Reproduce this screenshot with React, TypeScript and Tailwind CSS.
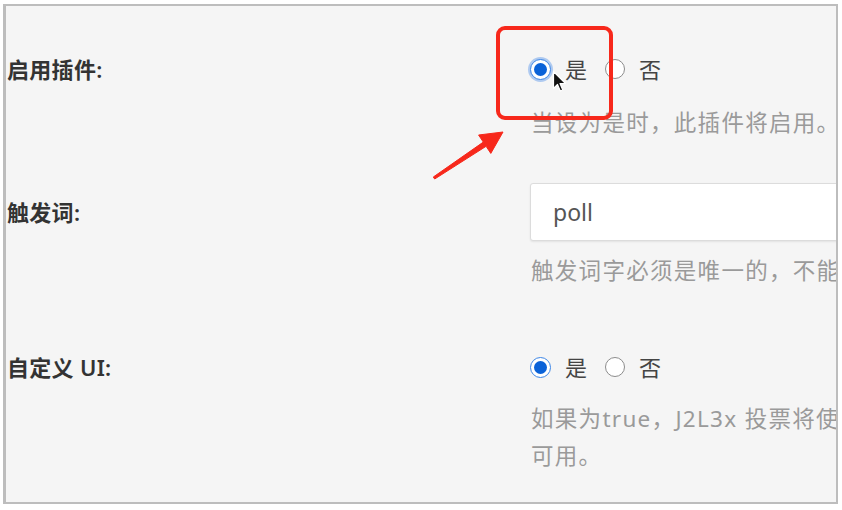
const font = "font-['Noto_Sans','Noto_Sans_CJK_SC',sans-serif]";

function Radio({ checked, focus }: { checked?: boolean; focus?: boolean }) {
  if (!checked) {
    return <span className="w-[20px] h-[20px] rounded-full border border-[#8c8c8c] bg-white shrink-0" />;
  }
  return (
    <span
      className={
        'w-[21px] h-[21px] rounded-full border-[1.5px] border-[#3d86e6] bg-white flex items-center justify-center shrink-0 ' +
        (focus ? 'shadow-[0_0_0_2px_rgba(90,150,235,0.45)]' : '')
      }
    >
      <span className="w-[13px] h-[13px] rounded-full bg-[#0a62d8]" />
    </span>
  );
}

function YesNo({ focus }: { focus?: boolean }) {
  return (
    <div className="h-[30px] flex items-center text-[22px] text-[#444]">
      <Radio checked focus={focus} />
      <span className="ml-[14px]">是</span>
      <span className="ml-[18px] flex"><Radio /></span>
      <span className="ml-[14px]">否</span>
    </div>
  );
}

const help = 'leading-[37px] text-[22.5px] tracking-[1.3px] text-[#9a9a9a] whitespace-nowrap pl-[1px]';
const label = 'w-[523px] shrink-0 flex items-center text-[22px] tracking-[0.3px] font-semibold text-[#333]';

export default function App() {
  return (
    <div className={`relative w-[842px] h-[510px] bg-white ${font}`}>
      <div className="absolute left-[3px] top-[4px] w-[835px] h-[500px] border-2 border-l-[3px] border-[#bdbdbd] bg-[#f5f5f5] overflow-hidden">
        <div className="w-[1100px] pl-[1px]">
          {/* 启用插件 */}
          <div className="flex mt-[48px]">
            <div className={`${label} h-[30px]`}>启用插件:</div>
            <div>
              <YesNo focus />
              <div className={`mt-[20px] ${help}`}>当设为是时，此插件将启用。</div>
            </div>
          </div>

          {/* 触发词 */}
          <div className="flex mt-[42px]">
            <div className={`${label} h-[58px]`}>触发词:</div>
            <div>
              <div className="w-[420px] h-[58px] bg-white border border-[#dcdcdc] rounded-[3px] shadow-[0_1px_2px_rgba(0,0,0,0.08)] flex items-center pl-[22px] text-[23px] text-[#555]">poll</div>
              <div className={`mt-[11px] ${help}`}>触发词字必须是唯一的，不能与其他插件重复。</div>
            </div>
          </div>

          {/* 自定义 UI */}
          <div className="flex mt-[63px]">
            <div className={`${label} h-[30px]`}>自定义 UI:</div>
            <div>
              <YesNo />
              <div className={`mt-[18px] ${help}`}>
                <div>如果为true，J2L3x 投票将使用自定义界面，否则默认界面</div>
                <div>可用。</div>
              </div>
            </div>
          </div>
        </div>
      </div>

      {/* annotation box */}
      <div className="absolute left-[496px] top-[26px] w-[117px] h-[94px] border-4 border-[#f7281b] rounded-[9px]" />

      {/* annotation arrow */}
      <svg className="absolute left-[425px] top-[125px]" width="85" height="60" viewBox="0 0 85 60">
        <polygon
          points="8.3,52 58.3,17.1 53.6,10 78,7 65.8,28.4 61.1,21.3 9.7,54"
          fill="#f7281b"
          stroke="#f7281b"
          strokeWidth="1"
          strokeLinejoin="round"
        />
      </svg>

      {/* mouse cursor */}
      <svg className="absolute left-[552px] top-[70px]" width="16" height="24" viewBox="0 0 16 24">
        <path
          d="M1.5 1.5 L1.5 18.5 L5.5 14.5 L8.3 21 L10.8 20 L8 13.5 L13.5 13.5 Z"
          fill="#111"
          stroke="#fff"
          strokeWidth="1.2"
          strokeLinejoin="round"
        />
      </svg>
    </div>
  );
}
